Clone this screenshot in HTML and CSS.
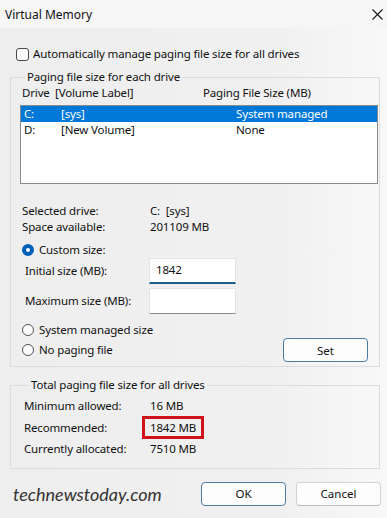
FILE: index.html
```html
<!DOCTYPE html>
<html lang="en">
<head>
    <meta charset="UTF-8">
    <title>Virtual Memory</title>
    <link rel="stylesheet" href="styles.css">
</head>
<body>
    <div class="dialog">
        <div class="titlebar">
            <span class="title">Virtual Memory</span>
            <svg class="close" width="11" height="11" viewBox="0 0 11 11">
                <path d="M0.5 0.5 L10.5 10.5 M10.5 0.5 L0.5 10.5" stroke="#1a1a1a" stroke-width="1.1" fill="none"/>
            </svg>
        </div>

        <div class="content">
            <div class="check-row">
                <span class="checkbox"></span>
                <span>Automatically manage paging file size for all drives</span>
            </div>

            <fieldset class="group group-drives">
                <legend>Paging file size for each drive</legend>
                <div class="list-head">
                    <span class="head-drive">Drive</span>
                    <span class="head-label">[Volume Label]</span>
                    <span>Paging File Size (MB)</span>
                </div>
                <div class="listbox">
                    <div class="list-row selected">
                        <span class="col-drive">C:</span>
                        <span class="col-label">[sys]</span>
                        <span>System managed</span>
                    </div>
                    <div class="list-row">
                        <span class="col-drive">D:</span>
                        <span class="col-label">[New Volume]</span>
                        <span>None</span>
                    </div>
                </div>

                <div class="info">
                    <div class="info-row"><span class="info-key">Selected drive:</span><span>C:&nbsp; [sys]</span></div>
                    <div class="info-row"><span class="info-key">Space available:</span><span>201109 MB</span></div>
                </div>

                <div class="radio-row first">
                    <span class="radio checked"></span>
                    <span>Custom size:</span>
                </div>
                <div class="size-grid">
                    <span class="size-label">Initial size (MB):</span>
                    <div class="textbox focused">1842</div>
                    <span class="size-label">Maximum size (MB):</span>
                    <div class="textbox"></div>
                </div>
                <div class="radio-row system">
                    <span class="radio"></span>
                    <span>System managed size</span>
                </div>
                <div class="last-row">
                    <div class="radio-row">
                        <span class="radio"></span>
                        <span>No paging file</span>
                    </div>
                    <button class="btn default set">Set</button>
                </div>
            </fieldset>

            <fieldset class="group group-total">
                <legend>Total paging file size for all drives</legend>
                <div class="total-row"><span class="total-key">Minimum allowed:</span><span>16 MB</span></div>
                <div class="total-row"><span class="total-key">Recommended:</span><span class="highlight">1842 MB</span></div>
                <div class="total-row"><span class="total-key">Currently allocated:</span><span>7510 MB</span></div>
            </fieldset>

            <div class="footer">
                <span class="watermark">technewstoday.com</span>
                <div class="buttons">
                    <button class="btn default">OK</button>
                    <button class="btn">Cancel</button>
                </div>
            </div>
        </div>
    </div>
</body>
</html>
```

FILE: styles.css
```css
body {
    margin: 0;
    background: #f0f0f0;
    font-family: "Noto Sans", "Open Sans", sans-serif;
    font-size: 11.5px;
    letter-spacing: -0.15px;
    color: #111;
}
.dialog {
    width: 387px;
    height: 518px;
    background: linear-gradient(90deg, #eeeeee, #f0f0f0 70%, #f8f8f8);
    overflow: hidden;
}
.titlebar {
    height: 28px;
    padding: 0 4px 0 5px;
    display: flex;
    align-items: center;
    justify-content: space-between;
    background: #f6f6f6;
}
.title {
    font-size: 12px;
    letter-spacing: 0;
}
.content {
    padding: 0 7px 0 10px;
}
.check-row {
    margin-top: 19px;
    margin-left: 6px;
    height: 14px;
    line-height: 14px;
    display: flex;
    align-items: center;
    gap: 4px;
}
.checkbox {
    width: 11px;
    height: 11px;
    border: 1px solid #4a4a4a;
    border-radius: 3px;
    background: #fafafa;
}
.group {
    margin: 0;
    border: 1px solid #dcdcdc;
    padding: 0 1px 0 9px;
    min-width: 0;
}
.group legend {
    padding: 0 2px;
    margin-left: 5px;
    line-height: 16px;
}
.group-drives {
    margin-top: 8px;
    padding-bottom: 4px;
}
.list-head {
    display: flex;
    padding-left: 2px;
    line-height: 16px;
}
.head-drive { width: 33px; }
.head-label { width: 148px; }
.listbox {
    margin-top: 4px;
    height: 77px;
    border: 1px solid #8a8a8a;
    background: #fff;
}
.list-row {
    display: flex;
    height: 16px;
    line-height: 16px;
    padding-left: 3px;
}
.list-row.selected {
    background: #0078d7;
    color: #fff;
}
.col-drive { width: 37px; }
.col-label { width: 175px; }
.info {
    margin-top: 19px;
    padding-left: 2px;
}
.info-row {
    display: flex;
    line-height: 15.5px;
}
.info-key { width: 128px; }
.radio-row {
    display: flex;
    align-items: center;
    gap: 5px;
    padding-left: 2px;
    line-height: 16px;
}
.radio-row.first { margin-top: 8px; }
.radio-row.system { margin-top: 8px; }
.radio {
    width: 10px;
    height: 10px;
    border: 1px solid #555;
    border-radius: 50%;
    background: #fafafa;
}
.radio.checked {
    width: 4px;
    height: 4px;
    border: 4px solid #005fb8;
    background: #fff;
}
.size-grid {
    display: grid;
    grid-template-columns: 124px 87px;
    align-items: center;
    row-gap: 4px;
    padding-left: 5px;
}
.size-label {
    line-height: 16px;
}
.textbox {
    height: 24px;
    line-height: 22px;
    padding: 0 6px;
    background: #fff;
    border: 1px solid #e3e3e3;
    border-bottom: 1px solid #8a8a8a;
}
.textbox.focused {
    height: 23px;
    border-bottom: 2px solid #1a5c8c;
}
.last-row {
    display: flex;
    align-items: center;
    justify-content: space-between;
    margin-top: 0;
    padding-right: 10px;
}
.btn {
    width: 85px;
    height: 24px;
    padding: 0;
    font-family: inherit;
    font-size: 11.5px;
    letter-spacing: 0;
    color: #111;
    background: #fdfdfd;
    border: 1px solid #d2d2d2;
    border-bottom-color: #bcbcbc;
    border-radius: 4px;
}
.btn.default {
    border: 1px solid #4d7ca6;
}
.group-total {
    margin-top: 10px;
    padding: 2px 1px 8px 13px;
}
.total-row {
    display: flex;
    align-items: center;
    height: 21.5px;
}
.total-key { width: 126px; }
.highlight {
    margin-left: -8px;
    padding: 0 5px;
    line-height: 17px;
    border: 3px solid #d0121d;
}
.footer {
    display: flex;
    align-items: center;
    justify-content: space-between;
    margin-top: 13px;
    padding-left: 3px;
}
.watermark {
    font-family: "Lato", sans-serif;
    font-style: italic;
    font-size: 18px;
    letter-spacing: 0;
    color: #333;
}
.buttons {
    display: flex;
    gap: 10px;
    margin-right: -1px;
}
```
